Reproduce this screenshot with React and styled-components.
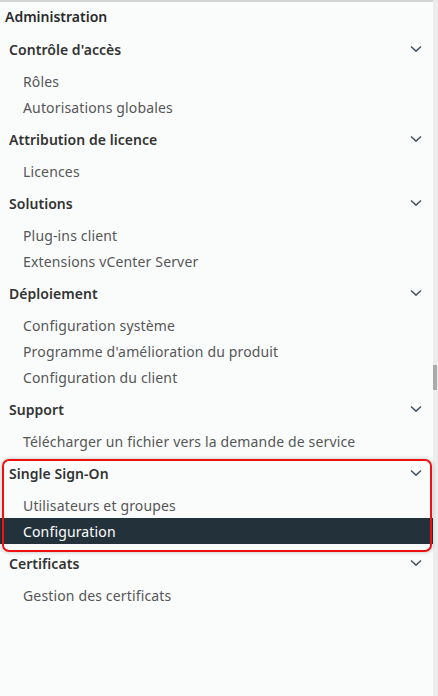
import React from "react";
import styled, { createGlobalStyle } from "styled-components";

const Global = createGlobalStyle`
  html, body { margin: 0; padding: 0; background: #fafcfc; }
  body { font-family: "Noto Sans", "Open Sans", sans-serif; }
`;

const Frame = styled.div`
  width: 438px;
  height: 696px;
  display: flex;
  background: #fafcfc;
  overflow: hidden;
`;

const Panel = styled.nav`
  position: relative;
  flex: 1;
  border-top: 2px solid #d4d4d4;
  display: flex;
  flex-direction: column;
`;

const Track = styled.div`
  width: 5px;
  background: #ececec;
  display: flex;
  flex-direction: column;
  padding-top: 365px;
`;

const Thumb = styled.div`
  width: 4px;
  height: 25px;
  background: #ababab;
`;

const Title = styled.div`
  height: 28px;
  padding-left: 5px;
  display: flex;
  align-items: center;
  font-size: 14px;
  font-weight: 600;
  color: #2b2b2b;
`;

const GroupHeader = styled.div`
  height: 26px;
  margin: 6px 0;
  padding: 0 11px 0 9px;
  display: flex;
  align-items: center;
  justify-content: space-between;
  font-size: 14px;
  font-weight: 600;
  color: #333;
  letter-spacing: 0.05px;
`;

const Item = styled.div`
  height: 26px;
  padding-left: 23px;
  display: flex;
  align-items: center;
  font-size: 14px;
  letter-spacing: 0.15px;
  color: ${(p) => (p.$active ? "#ffffff" : "#565656")};
  background: ${(p) => (p.$active ? "#23323a" : "transparent")};
`;

const Highlight = styled.div`
  position: absolute;
  left: 2px;
  top: 457px;
  width: 426px;
  height: 89px;
  border: 2px solid #ee1111;
  border-radius: 7px;
  box-shadow: 0 0 4px rgba(0, 0, 0, 0.25);
  pointer-events: none;
`;

const Chevron = () => (
  <svg width="12" height="8" viewBox="0 0 12 8" fill="none">
    <path d="M1 1.5 L6 6.2 L11 1.5" stroke="#4b5964" strokeWidth="1.6" />
  </svg>
);

const groups = [
  { title: "Contrôle d'accès", items: ["Rôles", "Autorisations globales"] },
  { title: "Attribution de licence", items: ["Licences"] },
  { title: "Solutions", items: ["Plug-ins client", "Extensions vCenter Server"] },
  {
    title: "Déploiement",
    items: [
      "Configuration système",
      "Programme d'amélioration du produit",
      "Configuration du client",
    ],
  },
  { title: "Support", items: ["Télécharger un fichier vers la demande de service"] },
  { title: "Single Sign-On", items: ["Utilisateurs et groupes", "Configuration"] },
  { title: "Certificats", items: ["Gestion des certificats"] },
];

export default function App() {
  return (
    <>
      <Global />
      <Frame>
        <Panel>
          <Title>Administration</Title>
          {groups.map((g) => (
            <React.Fragment key={g.title}>
              <GroupHeader>
                <span>{g.title}</span>
                <Chevron />
              </GroupHeader>
              {g.items.map((it) => (
                <Item key={it} $active={it === "Configuration"}>
                  {it}
                </Item>
              ))}
            </React.Fragment>
          ))}
          <Highlight />
        </Panel>
        <Track>
          <Thumb />
        </Track>
      </Frame>
    </>
  );
}
